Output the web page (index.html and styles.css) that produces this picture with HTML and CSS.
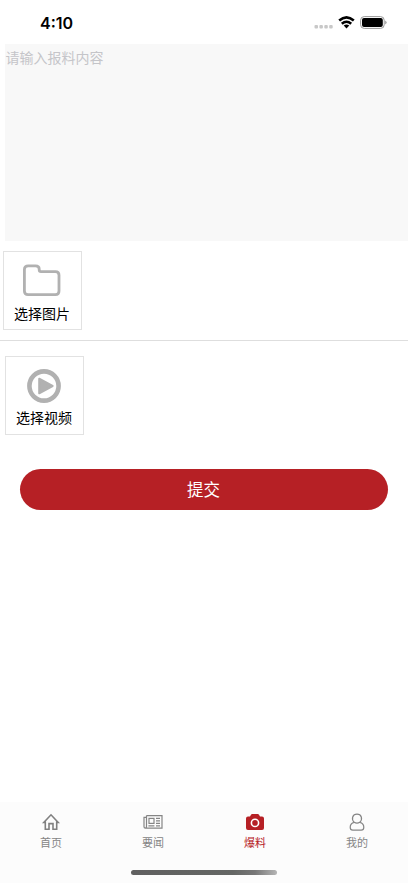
FILE: index.html
```html
<!DOCTYPE html>
<html lang="zh-CN">
<head>
<meta charset="utf-8">
<meta name="viewport" content="width=device-width, initial-scale=1">
<title>爆料</title>
<link rel="stylesheet" href="styles.css">
</head>
<body>
<div class="screen">
  <header class="status">
    <time class="clock">4:10</time>
    <div class="signals">
      <svg class="dots" width="20" height="4" viewBox="0 0 20 4" fill="#c8c8c8"><rect x=".5" width="3.5" height="3.5" rx="1"/><rect x="5.4" width="3.5" height="3.5" rx="1"/><rect x="10.3" width="3.5" height="3.5" rx="1"/><rect x="15.2" width="3.5" height="3.5" rx="1"/></svg>
      <svg class="wifi" width="17" height="13" viewBox="0 0 17 13"><g fill="none" stroke="#000" stroke-width="2.6"><path d="M1.2 4.6Q8.5-1.8 15.8 4.6"/><path d="M3.8 7.8Q8.5 3.7 13.2 7.8"/></g><path d="M5.7 9.6Q8.5 7.4 11.3 9.6L8.5 12.4Z"/></svg>
      <svg class="battery" width="27" height="13" viewBox="0 0 27 13"><rect x=".6" y=".6" width="23.6" height="11.8" rx="3.6" fill="none" stroke="#999"/><rect x="2" y="2" width="20.8" height="9" rx="2"/><path d="M25.3 4.4Q27.8 6.5 25.3 8.6Z" fill="#888"/></svg>
    </div>
  </header>
  <main class="content">
    <div class="editor">请输入报料内容</div>
    <section class="row row-image">
      <div class="picker">
        <svg width="38" height="33" viewBox="0 0 38 33" fill="none" stroke="#b1b1b1" stroke-width="2.8"><path d="M5.2 1.9H12.5Q16.2 1.9 16.2 5V5.8Q16.2 7.6 18 7.6H32.4Q36 7.6 36 11.2V27Q36 30.6 32.4 30.6H5Q1.4 30.6 1.4 27V5.5Q1.4 1.9 5.2 1.9Z"/></svg>
        <span>选择图片</span>
      </div>
    </section>
    <section class="row row-video">
      <div class="picker">
        <svg width="34" height="34" viewBox="0 0 34 34"><circle cx="17" cy="17" r="14.6" fill="none" stroke="#b1b1b1" stroke-width="4.6"/><path d="M12.2 9.7L25.6 17L12.2 24.3Z" fill="#b1b1b1" stroke="#b1b1b1" stroke-width="2" stroke-linejoin="round"/></svg>
        <span>选择视频</span>
      </div>
    </section>
    <button class="submit" type="button">提交</button>
  </main>
  <nav class="tabs">
    <div class="tab">
      <svg width="20" height="18" viewBox="0 0 20 18" fill="none" stroke="#808080" stroke-width="1.6"><path d="M4.3 9.4H2.8L10 1.8L17.2 9.4H15.7V16.2H12V10.6H8V16.2H4.3Z"/></svg>
      <span>首页</span>
    </div>
    <div class="tab">
      <svg width="20" height="18" viewBox="0 0 20 18" fill="none" stroke="#858585" stroke-width="1.2"><path d="M3.5 2.6H19V15.2H2.4Q1 15.2 1 13.8V4.3H3.5V13.4Q3.5 15 2.3 15.2M3.5 4.3V2.6"/><rect x="6" y="5.4" width="5" height="5"/><path d="M13 5.3H17M13 7.8H17M13 10.3H17M5.4 12.8H11.4M13 12.8H17"/></svg>
      <span>要闻</span>
    </div>
    <div class="tab active">
      <svg width="20" height="18" viewBox="0 0 20 18"><path d="M3 3.5H5L6 1.7Q6.4 1 7.2 1H12.8Q13.6 1 14 1.7L15 3.5H17Q19 3.5 19 5.5V15Q19 17 17 17H3Q1 17 1 15V5.5Q1 3.5 3 3.5Z" fill="#b62025"/><circle cx="10" cy="9.9" r="3.6" fill="none" stroke="#fff" stroke-width="1.6"/></svg>
      <span>爆料</span>
    </div>
    <div class="tab">
      <svg width="20" height="18" viewBox="0 0 20 18" fill="none" stroke="#858585" stroke-width="1.2"><path d="M7.2 9.3C3.9 5.9 5.6 1.2 10 1.2S16.1 5.9 12.8 9.3C15.5 9.9 16.8 12 16.8 14.3Q16.8 17.2 14.2 17.2H5.8Q3.2 17.2 3.2 14.3C3.2 12 4.5 9.9 7.2 9.3Q10 11 12.8 9.3"/></svg>
      <span>我的</span>
    </div>
    <div class="home-indicator"></div>
  </nav>
</div>
</body>
</html>
```
FILE: styles.css
```css
* {
  box-sizing: border-box;
}

body {
  margin: 0;
  background: #fff;
  color: #000;
  font-family: Inter, "Noto Sans CJK SC", sans-serif;
}

svg {
  display: block;
  flex: none;
}

.screen {
  height: 883px;
  display: flex;
  flex-direction: column;
  overflow: hidden;
}

.status {
  height: 44px;
  flex: none;
  display: flex;
  justify-content: space-between;
  padding: 0 21px 0 40px;
}

.clock {
  font-size: 16px;
  font-weight: 600;
  line-height: 20px;
  padding-top: 13px;
}

.signals {
  display: flex;
  align-items: flex-start;
  padding-top: 16px;
}

.dots {
  margin: 9px 4px 0 0;
}

.wifi {
  margin-right: 5px;
}

.content {
  flex: 1;
  display: flex;
  flex-direction: column;
}

.editor {
  height: 197px;
  margin: 0 0 0 5px;
  padding: 4px 0 0 0.5px;
  background: #f8f8f8;
  color: #c5c5c9;
  font-size: 14px;
  line-height: 20px;
}

.row-image {
  height: 100px;
  padding: 10px 3px;
  border-bottom: 1px solid #dedede;
}

.row-video {
  height: 128px;
  padding: 15px 5px;
}

.picker {
  width: 79px;
  height: 79px;
  border: 1px solid #e2e2e2;
  display: flex;
  flex-direction: column;
  align-items: center;
  padding: 12px 1px 0 0;
}

.picker span {
  margin-top: 7px;
  font-size: 14px;
  line-height: 20px;
}

.row-video .picker span {
  margin-top: 5px;
}

.submit {
  height: 41px;
  margin: 0 20px;
  padding: 0 1px 2px 0;
  border: 0;
  border-radius: 21px;
  background: #b62025;
  color: #fff;
  font-family: inherit;
  font-size: 16.5px;
  font-weight: 400;
}

.tabs {
  height: 81px;
  flex: none;
  display: grid;
  grid-template-columns: repeat(4, 1fr);
  grid-template-rows: 68px 5px;
  background: #fcfcfc;
}

.tab {
  display: flex;
  flex-direction: column;
  align-items: center;
  padding-top: 11px;
  color: #858585;
  font-size: 11px;
  line-height: 16px;
}

.tab span {
  margin-top: 4px;
}

.active {
  color: #b62025;
}

.home-indicator {
  grid-column: 1 / -1;
  justify-self: center;
  width: 146px;
  height: 5px;
  border-radius: 3px;
  background: linear-gradient(90deg, #606060 0%, #646664 70%, #777 85%, #b5b5b5 100%);
}
```
